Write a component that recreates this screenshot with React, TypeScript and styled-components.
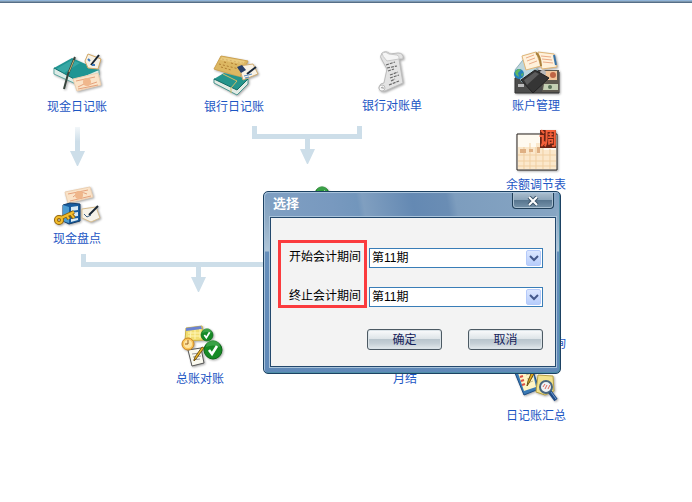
import React from 'react';
import styled, { createGlobalStyle } from 'styled-components';

const GlobalStyle = createGlobalStyle`
  * { box-sizing: border-box; }
  body {
    margin: 0;
    background: #fff;
    font-family: 'Liberation Sans', 'Noto Sans CJK SC', sans-serif;
    font-size: 12px;
  }
  button, select { font: inherit; }
`;

const Page = styled.div`
  display: flex;
  flex-direction: column;
  min-height: 100vh;
`;

const TopBar = styled.header`
  height: 3px;
  background: #90b4d8;
  border-bottom: 1px solid #566f88;
  box-shadow: inset 0 -1px #7e97ad;
`;

const Canvas = styled.main`
  position: relative;
  flex: 1;
  overflow: hidden;
`;

const Connectors = styled.svg`
  position: absolute;
  inset: 0;
  width: 100%;
  height: 100%;
`;

const Node = styled.a<{ $x: number; $y: number }>`
  position: absolute;
  left: ${(p) => p.$x}px;
  top: ${(p) => p.$y}px;
  transform: translateX(-50%);
  display: flex;
  flex-direction: column;
  align-items: center;
  color: #1c56c4;
  line-height: 16px;
  white-space: nowrap;
  text-decoration: none;
`;

const Icon = styled.svg`
  width: 48px;
  height: 48px;
  overflow: visible;
  filter: drop-shadow(1px 1px 1px rgba(0, 0, 0, 0.35));
`;

const Dialog = styled.section`
  position: absolute;
  left: 263px;
  top: 188px;
  width: 298px;
  display: flex;
  flex-direction: column;
  padding: 0 4px 6px 6px;
  border: 1px solid #1d4263;
  border-radius: 5px;
  background: linear-gradient(#7b9dc1 0, #8fabc5 28px, #b0c6d8 59px, #668fbb 60px, #6089b8 100%);
  box-shadow: inset 1px 1px #a9c3db, inset -1px -1px #4f8fa8;
`;

const TitleBar = styled.div`
  display: flex;
  justify-content: space-between;
  align-items: flex-start;
  height: 24px;
  padding: 0 2px 0 3px;
  margin-top: 1px;
  background: linear-gradient(80deg, #7f9fc2 0%, #7899bf 22%, #7296bc 31%, #809fc0 33%, #6489b3 50%, #6a8db4 62%, #7d9dbe 65%, #86a5c3 100%);
`;

const Title = styled.h1`
  margin: 0;
  color: #fff;
  font-size: 13px;
  font-weight: 700;
  line-height: 22px;
`;

const CloseButton = styled.button`
  display: grid;
  place-items: center;
  width: 42px;
  height: 16px;
  padding: 0;
  border: 1px solid #203f59;
  border-top: 0;
  border-radius: 0 0 4px 4px;
  background: linear-gradient(#a9bccd 0, #8ca5ba 45%, #58768f 50%, #7693aa 100%);
  box-shadow: inset 0 0 0 1px #a9bfd0;
`;

const Content = styled.form`
  padding: 30px 12px 16px 18px;
  border: 1px solid #23486d;
  background: #f3f3f3;
  box-shadow: 0 0 0 1px #a9c3da;
`;

const Fields = styled.div`
  display: grid;
  grid-template-columns: 80px 1fr;
  grid-template-rows: 20px 20px;
  row-gap: 19px;
`;

const Highlight = styled.div`
  grid-column: 1;
  grid-row: 1 / 3;
  margin: -8px 2px -1px -11px;
  border: 3px solid #fb3b3e;
  pointer-events: none;
`;

const Label = styled.label<{ $row: number }>`
  grid-column: 1;
  grid-row: ${(p) => p.$row};
  line-height: 18px;
  color: #000;
  white-space: nowrap;
`;

const SelectBox = styled.div<{ $row: number }>`
  grid-column: 2;
  grid-row: ${(p) => p.$row};
  display: grid;
  grid-template-columns: 1fr 15px;
  padding: 1px;
  border: 1px solid #397db7;
  background: #fff;
`;

const Select = styled.select`
  grid-area: 1 / 1 / 2 / 3;
  appearance: none;
  width: 100%;
  height: 16px;
  padding: 0 16px 0 1px;
  border: 0;
  background: transparent;
  color: #000;
  line-height: 16px;
  outline: none;
`;

const Arrow = styled.svg`
  grid-area: 1 / 2;
  width: 15px;
  height: 16px;
  border: 1px solid #b5cafa;
  border-radius: 2px;
  background: linear-gradient(#dce7ff, #b7cdfb);
  pointer-events: none;
`;

const Actions = styled.div`
  display: flex;
  justify-content: flex-end;
  gap: 26px;
  margin-top: 22px;
`;

const Button = styled.button`
  width: 75px;
  height: 21px;
  padding: 0;
  border: 1px solid #4c5963;
  border-radius: 3px;
  background: linear-gradient(#fafbfc 0, #dfe5e9 45%, #b8c4cc 48%, #c4ced5 70%, #e4eaed 100%);
  box-shadow: inset 0 0 0 1px #dbe3e8;
  color: #17235a;
  line-height: 18px;
`;

const Note = ({ points }: { points: string }) => (
  <polygon points={points} fill="#fae3c8" stroke="#ecd0b2" strokeWidth="1" />
);

const Check = ({ x, y, r }: { x: number; y: number; r: number }) => (
  <g transform={`translate(${x} ${y}) scale(${r / 9})`}>
    <circle r="9" fill="#168a26" stroke="#0b6716" />
    <path d="M-7-3a7 7 0 0 1 14 0Q0-6-7-3" fill="#52b35c" opacity=".6" />
    <path d="M-4 0L-1 4 4-4" fill="none" stroke="#fff" strokeWidth="2.6" />
  </g>
);

const CashJournal = () => (
  <Icon viewBox="0 0 48 48">
    <path d="M1 17v6l22 10 23-9v-5z" fill="#dcebe6" stroke="#5fa8a2" />
    <path d="M1 17L19 7l27 12-23 10z" fill="#1f9593" />
    <path d="M3 18l16-9 8 3-16 10z" fill="#47b5b0" opacity=".6" />
    <path d="M1 17l22 12v4" fill="none" stroke="#127270" />
    <path d="M32 10l3-7 13 5-3 10-10-1z" fill="#f7f1e4" stroke="#d3a866" />
    <path d="M46 4l-8 10" stroke="#182431" strokeWidth="2" />
    <path d="M35 8l2 2M39 14h3" stroke="#3d79bd" strokeWidth="2" />
    <path d="M22 6L15 23 11 38" fill="none" stroke="#37443c" strokeWidth="2" />
    <path d="M21 9l-5 12" stroke="#c4b474" />
    <Note points="20,28 45,22 48,34 24,40" />
    <path d="M23 30l19-4M25 38l20-4M25 36l6-3 4 1 9-3" fill="none" stroke="#e5a27c" strokeWidth="1" />
    <circle cx="34" cy="31" r="4" fill="#f0b78c" />
  </Icon>
);

const BankJournal = () => (
  <Icon viewBox="0 0 48 48">
    <path d="M11 5l27 5-8 16-26-8z" fill="#dcb762" stroke="#cda250" />
    <path d="M12 8l21 4M9 13l20 5M14 11l4 1m3 0l7 2M11 16l10 3" stroke="#b07c32" strokeDasharray="2 2" />
    <path d="M12 6l23 4-2 3-23-4z" fill="#f5dc98" opacity=".55" />
    <path d="M4 28v4l23 12 11-11v-5z" fill="#e3ebe4" stroke="#4a9690" />
    <path d="M4 28l10-6 24 6-11 11z" fill="#25958c" />
    <path d="M4 28l23 11 11-11" fill="none" stroke="#136a65" />
    <path d="M13 23l14 7-6 7v5" fill="none" stroke="#d5bd65" />
    <path d="M29 15l14-2 5 10-15 6z" fill="#f8f2e6" stroke="#d0ab70" />
    <path d="M27 16l5-2 4 5-5 3z" fill="#283f69" />
    <path d="M46 16l-9 7" stroke="#182638" strokeWidth="2" />
    <path d="M34 25l8-2M35 27l4-1" stroke="#5489c3" />
  </Icon>
);

const Statement = () => (
  <Icon viewBox="0 0 48 48">
    <path d="M14 3q4-3 8 1l8-1q6 0 5 6h-4l4 24-18 8q-6 1-6-4 1-4 5-4l3-14-5-9q-3-3 0-7z" fill="#e3e3e3" stroke="#bcbcbc" />
    <path d="M14 3q4-2 7 1l8 1q3 1 2 4l-12 2q-5-5-5-8" fill="#f5f5f5" stroke="#c8c8c8" />
    <path d="M18 15l9-3m-8 6l10-2m-9 5l6-2m-4 6l8-3m-8 6l9-3m-8 6l4-2m-6 6l10-4" stroke="#666" strokeWidth="1.2" strokeDasharray="3 1" />
    <circle cx="14" cy="38" r="3" fill="#f6f6f6" stroke="#bbb" />
    <path d="M13 38q3-2 2 1" fill="none" stroke="#999" />
  </Icon>
);

const Accounts = () => (
  <Icon viewBox="0 0 48 48">
    <path d="M3 28l19-8 25 2v21H3z" fill="#4c4c4b" stroke="#353535" />
    <path d="M3 20l8-10 12-2 3 18-16 6z" fill="#bdd6dd" stroke="#8fb2be" />
    <path d="M10 6l14-4 5 14-15 4zM26 2l16 2 3 13-15 2z" fill="#fff1db" stroke="#dfb577" />
    <path d="M14 8l8-3m-7 6l8-3m-6 6l8-3M29 6l10 1m-9 2l10 1m-9 2l10 1" stroke="#eaab87" />
    <path d="M24 3q4 2 5 13" fill="none" stroke="#a9803c" strokeWidth="2" />
    <path d="M42 5l2 10" stroke="#3773a8" strokeWidth="2" />
    <circle cx="7" cy="24" r="5" fill="#2582bc" /><path d="M3 22q3-5 6-2l-3 3 1 4-3-2m5-1l3-1-2 4" fill="#5fb662" />
    <path d="M31 20h16v22H30z" fill="#5d5950" />
    <path d="M33 21h12v9H33z" fill="#f1c59a" /><circle cx="41" cy="25" r="3" fill="#be6444" />
    <path d="M32 34h14v6H31z" fill="#c4d0b4" /><circle cx="38" cy="37" r="2" fill="#587158" />
    <circle cx="31" cy="23" r="3" fill="#b9b9b9" />
    <path d="M9 30l14-10 14 8-16 15z" fill="#353535" stroke="#222" />
    <path d="M12 30l11-8 4 2-12 11z" fill="#777" opacity=".6" />
    <path d="M6 34h6v3H6z" fill="#bcbcbc" />
  </Icon>
);

const Adjustment = () => (
  <Icon viewBox="0 0 48 48">
    <path d="M5 5h40v36H5z" fill="#fffaf0" stroke="#26201c" strokeWidth="1" />
    <path d="M6 18h18v-4h7v7h13v19H6z" fill="#fbe8cc" />
    <path d="M6 26h38M6 32h38M6 37h38M12 18v22M18 14v26M24 18v22M31 18v22M38 20v20" stroke="#f0cfa2" />
    <path d="M8 20h6v4H8zm9 0h4v3h-4zm8-2h3v6h-3z" fill="#dfb083" />
    <path d="M28 1h16v18H28z" fill="#6a2415" />
    <text x="36" y="16" textAnchor="middle" fontSize="18" fontWeight="700" fontFamily="Noto Sans CJK SC, sans-serif" fill="#f4603a">调</text>
  </Icon>
);

const CashCount = () => (
  <Icon viewBox="0 0 48 48">
    <Note points="12,9 37,4 40,14 15,20" />
    <path d="M15 11l20-4M17 18l21-5M20 14q7-7 14-3" fill="none" stroke="#e5a27c" />
    <circle cx="26" cy="12" r="4" fill="#efb68a" />
    <path d="M10 22l7-2 10 1v17l-11 3-6-3z" fill="#175c9e" stroke="#123d6b" />
    <path d="M10 22l6 2v16l-6-2z" fill="#4e9dd2" />
    <path d="M18 24l7-1v4l-7 1zm0 6l7-1v4l-7 1zm0 6l7-1v2l-7 2z" fill="#d9eaf4" />
    <circle cx="6" cy="37" r="3" fill="none" stroke="#92650b" strokeWidth="4" />
    <path d="M8 35l13-6m-3 2l3 4m-7-2l2 3" stroke="#92650b" strokeWidth="4" />
    <circle cx="6" cy="37" r="3" fill="none" stroke="#f3bd2c" strokeWidth="2" />
    <path d="M8 35l13-6m-3 2l3 4m-7-2l2 3" stroke="#f3bd2c" strokeWidth="2" />
    <path d="M29 26l14-2 4 11-9 4-9-4z" fill="#f7f3e9" stroke="#d6bb8c" />
    <path d="M45 23l-9 9" stroke="#1b2733" strokeWidth="2" />
    <path d="M31 31l3 3 4-2" fill="none" stroke="#3b5d80" />
  </Icon>
);

const LedgerCheck = () => (
  <Icon viewBox="0 0 48 48">
    <path d="M10 5l16-2 3 14-20 1z" fill="#f2de72" stroke="#c9b14a" />
    <path d="M10 5l15-2 1 3-16 2z" fill="#6b82d1" />
    <path d="M12 10h14M12 13h13M15 8l-1 9m5-10v9m5-10v9" stroke="#fff6b7" />
    <path d="M12 27l13-2 3 15-12 3z" fill="#faf9ef" stroke="#555" />
    <path d="M16 31l8-1m-7 4l8-1m-8 4l7-1" stroke="#999" />
    <path d="M28 25l-8 11-2 2 1-4 7-10z" fill="#edb827" stroke="#765516" />
    <circle cx="12" cy="21" r="6" fill="#f9c457" stroke="#cb8524" />
    <circle cx="12" cy="21" r="4" fill="#ffe5a3" />
    <path d="M12 17v4h-3" fill="none" stroke="#9b6120" />
    <Check x={31} y={12} r={6} />
    <Check x={37} y={27} r={9} />
  </Icon>
);

const BankCheck = () => (
  <Icon viewBox="0 0 48 48"><Check x={38} y={11} r={7} /></Icon>
);

const Summary = () => (
  <Icon viewBox="0 0 48 48">
    <path d="M3 13l17-5 7 21-15 6z" fill="#3979b4" stroke="#1c4d84" />
    <path d="M6 13l14-4 4 18-12 4z" fill="#fff5c5" />
    <path d="M8 17l3-1m-2 5l3-1m-2 5l3-1" stroke="#dc5145" strokeWidth="2" />
    <path d="M14 15l6-2m-5 6l6-2m-5 6l5-2" stroke="#c9bd88" />
    <path d="M24 10l-7 13-2 3 1-5 5-12z" fill="#e2ac1c" stroke="#6a5117" />
    <path d="M26 15l15 1 1 15-9 4-9-3z" fill="#f2e28c" stroke="#b7a144" />
    <circle cx="34" cy="27" r="6" fill="#eef2f4" stroke="#49667f" strokeWidth="2" />
    <path d="M31 27l2-3m0 5l2-4m1 4l2-4" stroke="#df6659" />
    <path d="M38 32l6 8" stroke="#214b86" strokeWidth="4" />
    <path d="M39 32l5 7" stroke="#6d9dd5" />
  </Icon>
);

const BlankIcon = () => <Icon viewBox="0 0 48 48" />;

const nodes = [
  { x: 77, y: 48, label: '现金日记账', Picture: CashJournal },
  { x: 234, y: 48, label: '银行日记账', Picture: BankJournal },
  { x: 392, y: 47, label: '银行对账单', Picture: Statement },
  { x: 536, y: 47, label: '账户管理', Picture: Accounts },
  { x: 536, y: 126, label: '余额调节表', Picture: Adjustment },
  { x: 77, y: 180, label: '现金盘点', Picture: CashCount },
  { x: 308, y: 180, label: '', Picture: BankCheck },
  { x: 200, y: 320, label: '总账对账', Picture: LedgerCheck },
  { x: 405, y: 320, label: '月结', Picture: BlankIcon },
  { x: 554, y: 285, label: '查询', Picture: BlankIcon },
  { x: 536, y: 357, label: '日记账汇总', Picture: Summary },
];

const periods = [
  { id: 'start', label: '开始会计期间' },
  { id: 'end', label: '终止会计期间' },
];

export default function App() {
  return (
    <>
      <GlobalStyle />
      <Page>
        <TopBar />
        <Canvas>
          <Connectors aria-hidden="true">
            <defs>
              <linearGradient id="fade" x2="0" y2="1">
                <stop stopColor="#cddee9" stopOpacity=".25" />
                <stop offset=".6" stopColor="#cddee9" />
              </linearGradient>
            </defs>
            <path d="M75 124h5v24h-5z" fill="url(#fade)" />
            <path
              fill="#cddee9"
              d="M70 148h15l-7 15h-1zM252 123h5v8h100v-8h5v13h-52v10h5l-7 15h-1l-7-15h5v-10h-53zM81 251h5v8h230v5H201v10h5l-7 15h-1l-7-15h5v-10H81z"
            />
          </Connectors>

          {nodes.map(({ x, y, label, Picture }) => (
            <Node key={`${x}-${y}`} $x={x} $y={y} href="#">
              <Picture />
              {label}
            </Node>
          ))}

          <Dialog role="dialog" aria-labelledby="dialog-title">
            <TitleBar>
              <Title id="dialog-title">选择</Title>
              <CloseButton type="button" aria-label="关闭">
                <svg width="12" height="10" viewBox="0 0 12 10">
                  <path d="M2 1l8 8M10 1L2 9" stroke="#3c5469" strokeWidth="4" />
                  <path d="M2 1l8 8M10 1L2 9" stroke="#fff" strokeWidth="2" />
                </svg>
              </CloseButton>
            </TitleBar>
            <Content>
              <Fields>
                {periods.map(({ id, label }, i) => (
                  <React.Fragment key={id}>
                    <Label htmlFor={id} $row={i + 1}>{label}</Label>
                    <SelectBox $row={i + 1}>
                      <Select id={id} defaultValue="11">
                        <option value="11">第11期</option>
                      </Select>
                      <Arrow viewBox="0 0 13 14" aria-hidden="true">
                        <path d="M3 5l4 4 4-4" fill="none" stroke="#44588a" strokeWidth="2" />
                      </Arrow>
                    </SelectBox>
                  </React.Fragment>
                ))}
                <Highlight />
              </Fields>
              <Actions>
                <Button type="button">确定</Button>
                <Button type="button">取消</Button>
              </Actions>
            </Content>
          </Dialog>
        </Canvas>
      </Page>
    </>
  );
}
